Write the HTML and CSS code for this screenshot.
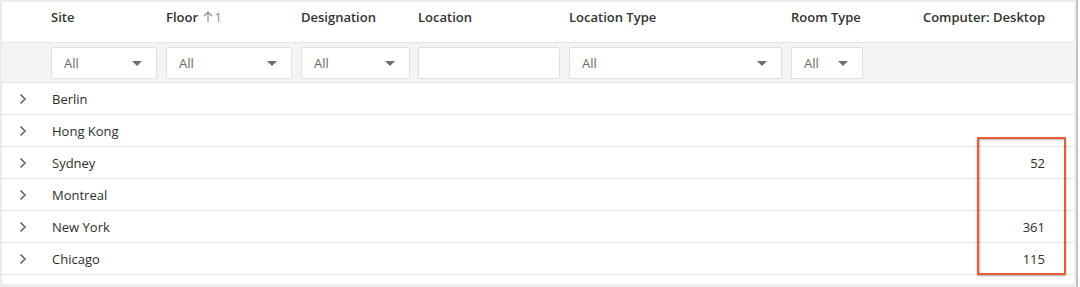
FILE: index.html
```html
<!DOCTYPE html>
<html lang="en">
<head>
    <meta charset="UTF-8">
    <meta name="viewport" content="width=device-width, initial-scale=1.0">
    <title>Assets by Site</title>
    <link rel="stylesheet" href="styles.css">
</head>
<body>
    <div class="frame">
        <div class="table">
            <div class="row head">
                <div></div>
                <div class="cell">Site</div>
                <div class="cell">Floor <span class="sort"><svg width="10" height="12" viewBox="0 0 10 12"><path d="M5 11.5V1M1 5L5 1L9 5" fill="none" stroke="#8a8a8a" stroke-width="1.1"/></svg>1</span></div>
                <div class="cell">Designation</div>
                <div class="cell">Location</div>
                <div class="cell">Location Type</div>
                <div class="cell">Room Type</div>
                <div class="cell num">Computer: Desktop</div>
            </div>
            <div class="row filters">
                <div></div>
                <div class="cell"><div class="select w-site">All<span class="caret"></span></div></div>
                <div class="cell"><div class="select w-floor">All<span class="caret"></span></div></div>
                <div class="cell"><div class="select w-desig">All<span class="caret"></span></div></div>
                <div class="cell"><div class="select w-loc"></div></div>
                <div class="cell"><div class="select w-ltype">All<span class="caret"></span></div></div>
                <div class="cell"><div class="select w-room">All<span class="caret"></span></div></div>
                <div></div>
            </div>
            <div class="row item">
                <div class="expander"><svg width="8" height="12" viewBox="0 0 8 12"><path d="M1.5 1.5L6 6L1.5 10.5" fill="none" stroke="#666" stroke-width="1.6"/></svg></div>
                <div class="cell name">Berlin</div>
                <div></div><div></div><div></div><div></div><div></div>
                <div class="cell num"></div>
            </div>
            <div class="row item">
                <div class="expander"><svg width="8" height="12" viewBox="0 0 8 12"><path d="M1.5 1.5L6 6L1.5 10.5" fill="none" stroke="#666" stroke-width="1.6"/></svg></div>
                <div class="cell name">Hong Kong</div>
                <div></div><div></div><div></div><div></div><div></div>
                <div class="cell num"></div>
            </div>
            <div class="row item">
                <div class="expander"><svg width="8" height="12" viewBox="0 0 8 12"><path d="M1.5 1.5L6 6L1.5 10.5" fill="none" stroke="#666" stroke-width="1.6"/></svg></div>
                <div class="cell name">Sydney</div>
                <div></div><div></div><div></div><div></div><div></div>
                <div class="cell num">52</div>
            </div>
            <div class="row item">
                <div class="expander"><svg width="8" height="12" viewBox="0 0 8 12"><path d="M1.5 1.5L6 6L1.5 10.5" fill="none" stroke="#666" stroke-width="1.6"/></svg></div>
                <div class="cell name">Montreal</div>
                <div></div><div></div><div></div><div></div><div></div>
                <div class="cell num"></div>
            </div>
            <div class="row item">
                <div class="expander"><svg width="8" height="12" viewBox="0 0 8 12"><path d="M1.5 1.5L6 6L1.5 10.5" fill="none" stroke="#666" stroke-width="1.6"/></svg></div>
                <div class="cell name">New York</div>
                <div></div><div></div><div></div><div></div><div></div>
                <div class="cell num">361</div>
            </div>
            <div class="row item">
                <div class="expander"><svg width="8" height="12" viewBox="0 0 8 12"><path d="M1.5 1.5L6 6L1.5 10.5" fill="none" stroke="#666" stroke-width="1.6"/></svg></div>
                <div class="cell name">Chicago</div>
                <div></div><div></div><div></div><div></div><div></div>
                <div class="cell num">115</div>
            </div>
            <div class="highlight"></div>
        </div>
        <div class="gutter"></div>
        <div class="scrollbar"></div>
    </div>
</body>
</html>
```

FILE: styles.css
```css
body {
    margin: 0;
    padding: 0;
    background: #ffffff;
    font-family: 'Open Sans', sans-serif;
    font-size: 13px;
    color: #2e2e2e;
}
.frame {
    display: flex;
    height: 287px;
    background: #ffffff;
}
.table {
    position: relative;
    width: 1072px;
    height: 282px;
    margin-top: 2px;
    background: #ffffff;
    border-left: 2px solid #ececec;
    border-bottom: 3px solid #ececec;
    box-shadow: 0 -2px 0 #ececec;
}
.gutter {
    width: 2px;
    background: #f1f1f1;
}
.scrollbar {
    width: 2px;
    background: #c4c4c4;
}
.row {
    display: grid;
    grid-template-columns: 49px 115px 135px 117px 151px 222px 79px 1fr;
    border-bottom: 1px solid #e4e4e4;
    box-sizing: border-box;
}
.head {
    height: 41px;
    font-weight: 600;
    color: #333;
}
.head .cell {
    padding-top: 6px;
    line-height: 18px;
}
.name {
    padding-left: 1px;
}
.num {
    text-align: right;
    padding-right: 29px;
}
.sort {
    font-weight: 400;
    color: #8a8a8a;
    margin-left: 2px;
}
.sort svg {
    vertical-align: -1px;
    margin-right: 1px;
}
.filters {
    height: 40px;
    background: #f4f4f4;
    padding-top: 4px;
}
.select {
    height: 32px;
    box-sizing: border-box;
    background: #ffffff;
    border: 1px solid #e0e0e0;
    border-radius: 2px;
    display: flex;
    align-items: center;
    justify-content: space-between;
    padding: 0 14px 0 12px;
    color: #6a6a6a;
}
.caret {
    width: 0;
    height: 0;
    border-left: 5px solid transparent;
    border-right: 5px solid transparent;
    border-top: 5px solid #6f6f6f;
}
.w-site { width: 106px; }
.w-floor { width: 126px; }
.w-desig { width: 109px; }
.w-loc { width: 142px; }
.w-ltype { width: 213px; }
.w-room { width: 72px; }
.item {
    height: 32px;
    align-items: center;
}
.expander {
    display: flex;
    align-items: center;
    padding-left: 17px;
}
.expander svg {
    display: block;
}
.highlight {
    position: absolute;
    left: 975px;
    top: 135px;
    width: 85px;
    height: 134px;
    border: 2.5px solid #e45e37;
    border-radius: 1px;
    box-shadow: 0 1px 2px rgba(0, 0, 0, 0.35), inset 1px 1px 2px rgba(0, 0, 0, 0.3);
}
```
